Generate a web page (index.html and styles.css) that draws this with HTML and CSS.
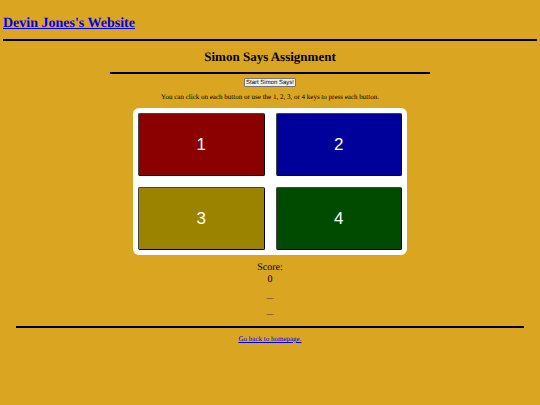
FILE: index.html
```html
<!DOCTYPE html>
<html lang="en">
<head>
    <meta charset="UTF-8">
    <meta name="viewport" content="width=device-width, initial-scale=1.0">
    <title>Simon Says Assignment</title>
    <link rel="stylesheet" href="styles.css">
</head>
<body>
    <header class="site-header">
        <h1><a href="#">Devin Jones's Website</a></h1>
    </header>

    <main>
        <h2 class="page-title">Simon Says Assignment</h2>

        <button type="button" class="start-button">Start Simon Says!</button>
        <p class="instructions">You can click on each button or use the 1, 2, 3, or 4 keys to press each button.</p>

        <div class="board">
            <button type="button" class="pad red">1</button>
            <button type="button" class="pad blue">2</button>
            <button type="button" class="pad yellow">3</button>
            <button type="button" class="pad green">4</button>
        </div>

        <div class="score">
            <div>Score:</div>
            <div id="score">0</div>
        </div>
        <p class="status">__</p>
        <p class="status">__</p>
    </main>

    <footer class="site-footer">
        <a href="#">Go back to homepage.</a>
    </footer>
</body>
</html>
```

FILE: styles.css
```css
* {
    box-sizing: border-box;
}

body {
    margin: 0;
    background: goldenrod;
    color: black;
    font-family: "Liberation Serif", "Times New Roman", serif;
    font-size: 7px;
    line-height: 8px;
    text-align: center;
    text-rendering: geometricPrecision;
}

a {
    color: #0000ee;
}

.site-header {
    margin: 0 3px;
    padding: 16px 0 7px;
    border-bottom: 2px solid black;
    text-align: left;
}

.site-header h1 {
    margin: 0;
    font-size: 14px;
    line-height: 16px;
}

.page-title {
    width: 320px;
    max-width: 100%;
    margin: 8px auto 4px;
    padding-bottom: 7px;
    border-bottom: 2px solid black;
    font-size: 13px;
    line-height: 16px;
}

.start-button {
    display: block;
    margin: 0 auto;
    padding: 1px 1px 0;
    border: 1px solid #767676;
    border-radius: 1px;
    background: #efefef;
    color: black;
    font-family: "Liberation Sans", Arial, sans-serif;
    font-size: 6px;
    line-height: 6px;
    text-rendering: geometricPrecision;
}

.instructions {
    margin: 6px 0 7px;
}

.board {
    display: grid;
    grid-template-columns: 1fr 1fr;
    gap: 11px;
    width: 274px;
    max-width: 100%;
    margin: 0 auto;
    padding: 5px;
    border-radius: 6px;
    background: white;
}

.pad {
    height: 63px;
    padding: 0;
    border: 1px outset #444;
    border-radius: 2px;
    color: white;
    font-family: "Liberation Sans", Arial, sans-serif;
    font-size: 17px;
}

.red {
    background: #8b0000;
}

.blue {
    background: #00009b;
}

.yellow {
    background: #9b8300;
}

.green {
    background: #004b00;
}

.score {
    margin-top: 7px;
    font-size: 10px;
    line-height: 12px;
}

.status {
    margin: 6px 0 8px;
}

.site-footer {
    margin: 10px 16px 0;
    padding-top: 7px;
    border-top: 2px solid black;
}
```
